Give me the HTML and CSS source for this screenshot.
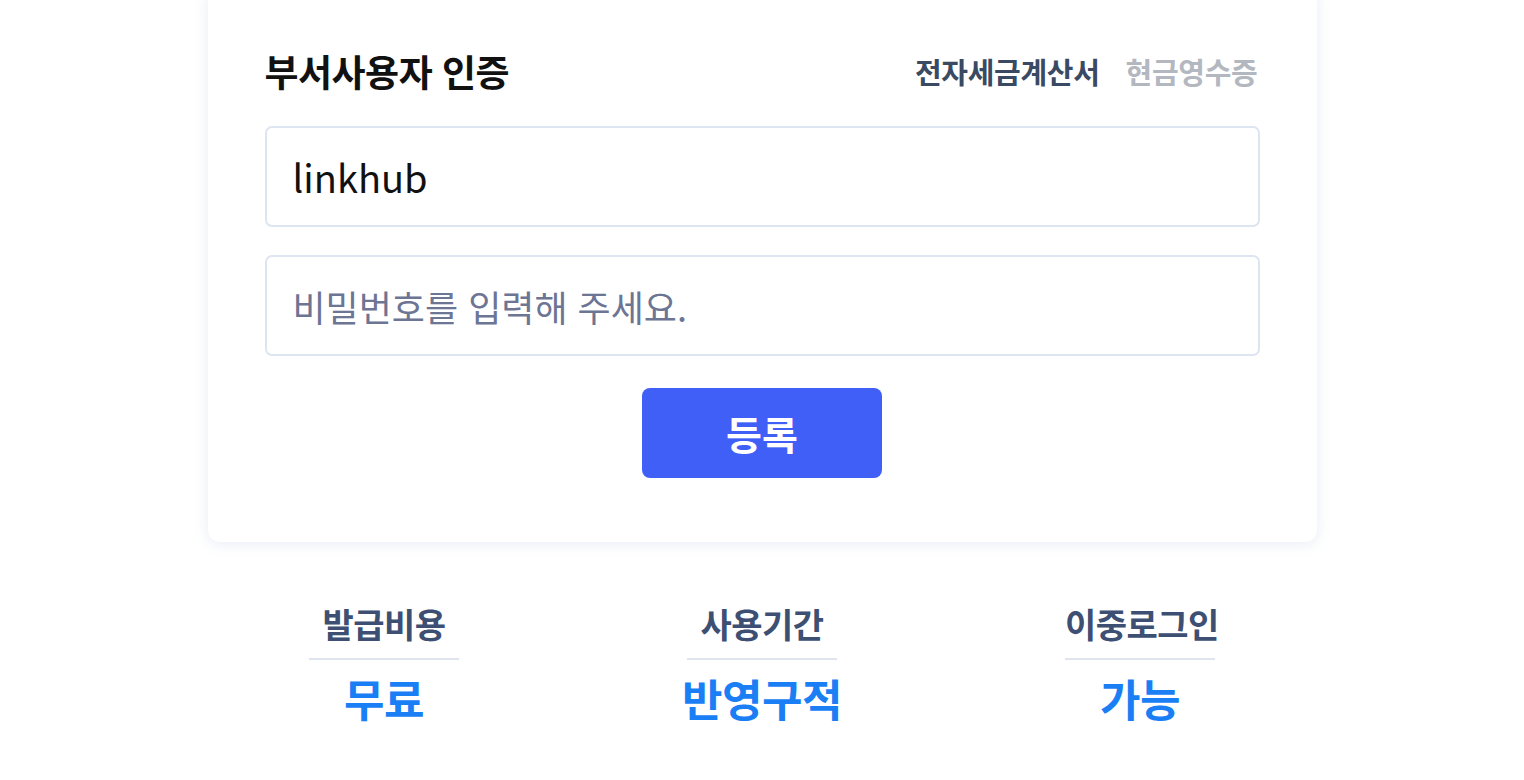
FILE: index.html
```html
<!DOCTYPE html>
<html lang="ko">
<head>
<meta charset="utf-8">
<title>부서사용자 인증</title>
<link rel="stylesheet" href="styles.css">
</head>
<body>
<main class="page">
  <section class="card">
    <div class="card-head">
      <h1 class="title">부서사용자 인증</h1>
      <nav class="tabs">
        <span class="tab tab-active">전자세금계산서</span>
        <span class="tab">현금영수증</span>
      </nav>
    </div>
    <form class="form">
      <input class="field" type="text" value="linkhub">
      <input class="field" type="password" placeholder="비밀번호를 입력해 주세요.">
      <button class="submit" type="button">등록</button>
    </form>
  </section>
  <section class="features">
    <div class="feature">
      <div class="feature-label">발급비용</div>
      <div class="feature-value">무료</div>
    </div>
    <div class="feature">
      <div class="feature-label">사용기간</div>
      <div class="feature-value">반영구적</div>
    </div>
    <div class="feature">
      <div class="feature-label">이중로그인</div>
      <div class="feature-value">가능</div>
    </div>
  </section>
</main>
</body>
</html>
```
FILE: styles.css
```css
* { box-sizing: border-box; }
html, body { margin: 0; padding: 0; background: #ffffff; }
body {
  font-family: "Noto Sans CJK KR", "Noto Sans", sans-serif;
  color: #111111;
  overflow: hidden;
}
.page {
  width: 1524px;
  height: 780px;
  display: flex;
  flex-direction: column;
  align-items: center;
}
.card {
  width: 1109px;
  margin-top: -12px;
  padding: 54px 57px 64px;
  background: #ffffff;
  border-radius: 12px;
  box-shadow: 0 2px 14px rgba(150, 170, 210, 0.22);
}
.card-head {
  display: flex;
  align-items: center;
  justify-content: space-between;
  height: 58px;
}
.title {
  margin: 0;
  font-size: 37px;
  font-weight: 700;
  line-height: 56px;
  letter-spacing: -0.5px;
  color: #111111;
}
.tabs {
  display: flex;
  gap: 26px;
  padding-right: 2px;
}
.tab {
  font-size: 29px;
  font-weight: 700;
  color: #b3b7bf;
  letter-spacing: -0.3px;
}
.tab-active { color: #3a4a63; }
.form {
  display: flex;
  flex-direction: column;
  align-items: center;
  gap: 28px;
  margin-top: 26px;
}
.field {
  width: 100%;
  height: 101px;
  padding: 0 26px;
  border: 2px solid #dde5f0;
  border-radius: 7px;
  font-family: "Noto Sans CJK KR", "Noto Sans", sans-serif;
  font-size: 38px;
  color: #111111;
  background: #ffffff;
  outline: none;
}
.field::placeholder { color: #6c7593; font-size: 36px; }
.submit {
  margin-top: 4px;
  width: 240px;
  height: 90px;
  border: 0;
  border-radius: 8px;
  background: #405ff6;
  color: #ffffff;
  font-family: "Noto Sans CJK KR", "Noto Sans", sans-serif;
  font-size: 39px;
  font-weight: 700;
}
.features {
  display: grid;
  grid-template-columns: repeat(3, 378px);
  margin-top: 62px;
}
.feature {
  display: flex;
  flex-direction: column;
  align-items: center;
}
.feature-label {
  width: 150px;
  padding-bottom: 14px;
  border-bottom: 2px solid #dfe4ee;
  text-align: center;
  font-size: 34px;
  font-weight: 700;
  line-height: 40px;
  letter-spacing: -0.5px;
  color: #3d4f72;
  white-space: nowrap;
}
.feature-value {
  margin-top: 13px;
  font-size: 44px;
  font-weight: 700;
  line-height: 50px;
  letter-spacing: -0.5px;
  color: #1a7ef5;
}
```
